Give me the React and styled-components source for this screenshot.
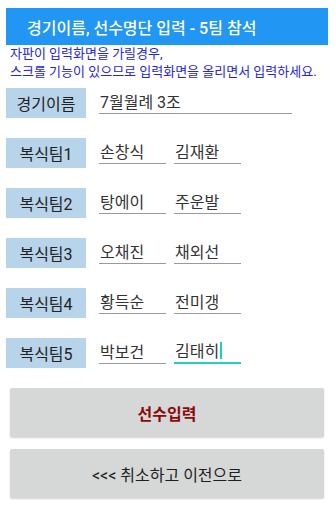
import React from 'react';
import styled, { createGlobalStyle } from 'styled-components';

const GlobalStyle = createGlobalStyle`
  body {
    margin: 0;
    background: #ffffff;
    font-family: Roboto, "Noto Sans CJK KR", sans-serif;
  }
`;

const Page = styled.div`
  width: 336px;
  height: 512px;
  box-sizing: border-box;
  padding: 8px 8px 0 6px;
  display: flex;
  flex-direction: column;
`;

const TitleBar = styled.div`
  height: 37px;
  background: #2196f3;
  color: #ffffff;
  font-size: 16px;
  font-weight: 500;
  display: flex;
  align-items: center;
  padding-left: 21px;
`;

const Notice = styled.div`
  color: #2626e0;
  font-size: 13px;
  line-height: 18px;
  padding-left: 4px;
  margin-bottom: 7px;
  white-space: nowrap;
`;

const Rows = styled.div`
  display: flex;
  flex-direction: column;
  gap: 20px;
`;

const Row = styled.div`
  display: flex;
  align-items: stretch;
  height: 30px;
`;

const Label = styled.div`
  width: 80px;
  background: #b8d4ea;
  color: #222;
  font-size: 16px;
  display: flex;
  align-items: center;
  justify-content: center;
  margin-right: 13px;
`;

const Field = styled.div`
  width: ${p => p.$width}px;
  margin-right: ${p => p.$gap || 0}px;
  height: 26px;
  box-sizing: border-box;
  border-bottom: ${p => (p.$focused ? '2px solid #1fd1bd' : '1.5px solid #9a9a9a')};
  color: #333;
  font-size: 16px;
  display: flex;
  align-items: center;
  padding-left: 1px;
`;

const Caret = styled.span`
  display: inline-block;
  width: 2px;
  height: 17px;
  background: #1fd1bd;
  margin-left: 1px;
`;

const Buttons = styled.div`
  margin-top: 20px;
  padding-left: 4px;
  display: flex;
  flex-direction: column;
  gap: 12px;
`;

const Button = styled.button`
  width: 314px;
  height: 49px;
  border: none;
  border-radius: 2px;
  background: #d6d7d7;
  box-shadow: 0 1px 2px rgba(0, 0, 0, 0.18);
  font-family: Roboto, "Noto Sans CJK KR", sans-serif;
  font-size: 16px;
  font-weight: ${p => (p.$primary ? 700 : 400)};
  color: ${p => (p.$primary ? '#8a0a0a' : '#1e1e1e')};
  padding: 0;
`;

const teams = [
  ['손창식', '김재환'],
  ['탕에이', '주운발'],
  ['오채진', '채외선'],
  ['황득순', '전미갱'],
  ['박보건', '김태히'],
];

export default function App() {
  return (
    <Page>
      <GlobalStyle />
      <TitleBar>경기이름, 선수명단 입력 - 5팀 참석</TitleBar>
      <Notice>
        자판이 입력화면을 가릴경우,
        <br />
        스크롤 기능이 있으므로 입력화면을 올리면서 입력하세요.
      </Notice>
      <Rows>
        <Row>
          <Label>경기이름</Label>
          <Field $width={193}>7월월례 3조</Field>
        </Row>
        {teams.map(([a, b], i) => {
          const last = i === teams.length - 1;
          return (
            <Row key={i}>
              <Label>복식팀{i + 1}</Label>
              <Field $width={67} $gap={8}>{a}</Field>
              <Field $width={67} $focused={last}>
                {b}
                {last && <Caret />}
              </Field>
            </Row>
          );
        })}
      </Rows>
      <Buttons>
        <Button $primary>선수입력</Button>
        <Button>&lt;&lt;&lt; 취소하고 이전으로</Button>
      </Buttons>
    </Page>
  );
}
